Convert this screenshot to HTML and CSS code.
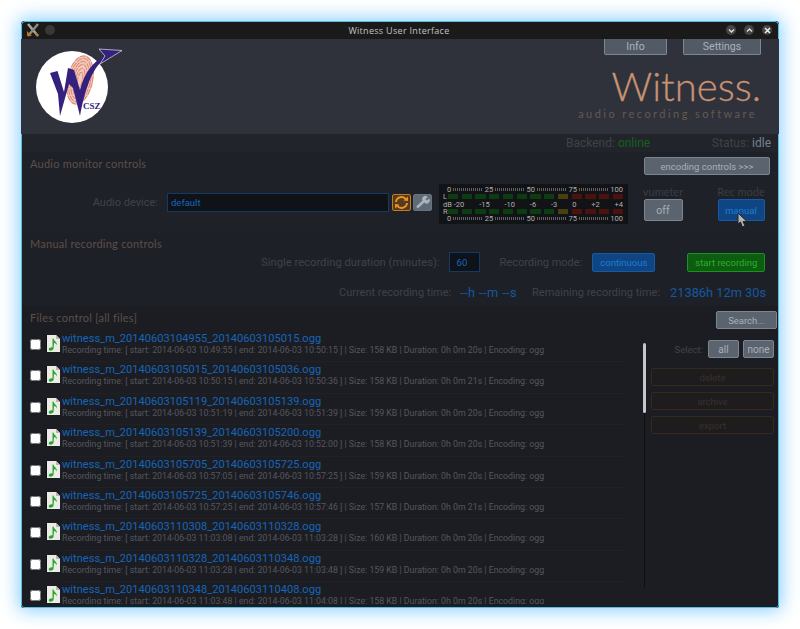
FILE: index.html
```html
<!DOCTYPE html>
<html>
<head>
    <title>Witness User Interface</title>
    <link rel="stylesheet" href="styles.css">
</head>
<body>
    <svg class="defs" width="0" height="0">
        <symbol id="ogg" viewBox="0 0 14 17">
            <path d="M0 0H10L14 4V17H0Z" fill="#ecece6"/>
            <path d="M0 0H1V17H0Z" fill="#111"/>
            <path d="M10 0V4H14Z" fill="#b9b9b0"/>
            <path d="M6.500 3.500L7.500 3.500C8 6 11.500 7 10.800 10.500C10.400 9 9.400 8.400 8 8.100L7.600 13.500C7.400 15.600 3.600 16.400 2.800 14.800C2.300 13.400 4.400 12 6.500 12.400Z" fill="#2aa52e"/>
        </symbol>
    </svg>

    <div class="window">
        <div class="titlebar">
            <div class="title-left">
                <svg class="app-icon" width="14" height="14" viewBox="0 0 14 14">
                    <path d="M2 1L12 13" stroke="#a8a8a0" stroke-width="2.5"/>
                    <path d="M12 1L2 13" stroke="#8f8a80" stroke-width="2.5"/>
                    <path d="M1 8L6 13H1ZM9 9L13 12L10 13Z" fill="#b5741f"/>
                </svg>
                <span class="title-dot"></span>
            </div>
            <div class="title-text">Witness User Interface</div>
            <div class="title-right">
                <span class="win-btn"><svg width="7" height="7" viewBox="0 0 7 7"><path d="M1 2.500L3.500 5L6 2.500" fill="none" stroke="#ddd" stroke-width="1.400"/></svg></span>
                <span class="win-btn"><svg width="7" height="7" viewBox="0 0 7 7"><path d="M1 4.500L3.500 2L6 4.500" fill="none" stroke="#ddd" stroke-width="1.400"/></svg></span>
                <span class="win-btn"><svg width="7" height="7" viewBox="0 0 7 7"><path d="M1 1L6 6M6 1L1 6" fill="none" stroke="#eee" stroke-width="1.500"/></svg></span>
            </div>
        </div>

        <div class="header">
            <svg class="logo" width="96" height="80" viewBox="30 46 96 80">
                <circle cx="72" cy="87" r="36" fill="#fff"/>
                <g transform="rotate(12 80 80)">
                    <ellipse cx="80" cy="80" rx="13" ry="25" fill="#f3c9bd"/>
                    <g fill="none" stroke="#dc8672" stroke-width="1" stroke-dasharray="6 1">
                        <ellipse cx="80" cy="80" rx="12.500" ry="24.500"/>
                        <ellipse cx="80" cy="80" rx="10.500" ry="22"/>
                        <ellipse cx="80" cy="80" rx="8.500" ry="19"/>
                        <ellipse cx="80" cy="80" rx="6.500" ry="16"/>
                        <ellipse cx="80" cy="80" rx="4.500" ry="12"/>
                        <ellipse cx="80" cy="80" rx="2.500" ry="8"/>
                    </g>
                </g>
                <path d="M50 73L57.500 71L64 92L68 68L74 70L80 90C84 74 92 62 105 56L99 49L122 50.500L100 64L104 59.500C92 68 85 90 80 116L73 88L69 84L60 116L58 94Z" fill="#34217e"/>
                <path d="M99 49L122 50.500L100 64L105 56Z" fill="#34217e" stroke="#fff" stroke-width=".6"/>
                <text class="logo-text" x="83" y="109">CSZ</text>
            </svg>
            <div class="top-buttons">
                <button class="tab tab-info">Info</button>
                <button class="tab tab-settings">Settings</button>
            </div>
            <div class="brand">
                <div class="brand-name">Witness.</div>
                <div class="brand-sub">audio recording software</div>
            </div>
        </div>

        <div class="status">
            <span class="dim">Backend: <span class="online">online</span></span>
            <span class="dim status-right">Status: <span class="idle">idle</span></span>
        </div>

        <div class="section monitor">
            <div class="section-head">
                <h2>Audio monitor controls</h2>
                <button class="btn btn-encoding">encoding controls &gt;&gt;&gt;</button>
            </div>
            <div class="monitor-row">
                <label class="dim device-label">Audio device:</label>
                <div class="field field-device">default</div>
                <button class="icon-btn icon-orange">
                    <svg width="15" height="15" viewBox="0 0 15 15"><path d="M2 7A5.500 5.500 0 0 1 12 4.500M13 8A5.500 5.500 0 0 1 3 10.500" fill="none" stroke="#e8922a" stroke-width="2"/><path d="M9.500 5.500L14 6V1.500ZM5.500 9.500L1 9V13.500Z" fill="#e8922a"/></svg>
                </button>
                <button class="icon-btn icon-grey">
                    <svg width="15" height="15" viewBox="0 0 15 15"><path d="M2 12.500L9 6" stroke="#aab4be" stroke-width="2.500"/><path d="M8 6A3 3 0 0 1 12.500 2L10.500 4.500L12 5.500L14 3.500A3 3 0 0 1 9.500 7.500Z" fill="#aab4be"/></svg>
                </button>
                <div class="vu">
                    <div class="vu-scale"><span>0</span><i></i><span>25</span><i></i><span>50</span><i></i><span>75</span><i></i><span>100</span></div>
                    <div class="vu-chan"><b>L</b><div class="vu-bars"><u></u><u></u><u></u><u></u><u></u><u></u><u></u><u></u><u class="y"></u><u class="r"></u><u class="r"></u><u class="r"></u><u class="r"></u></div></div>
                    <div class="vu-db"><span>dB -20</span><span>-15</span><span>-10</span><span>-6</span><span>-3</span><span>0</span><span>+2</span><span>+4</span></div>
                    <div class="vu-chan"><b>R</b><div class="vu-bars"><u></u><u></u><u></u><u></u><u></u><u></u><u></u><u></u><u class="y"></u><u class="r"></u><u class="r"></u><u class="r"></u><u class="r"></u></div></div>
                    <div class="vu-scale"><span>0</span><i></i><span>25</span><i></i><span>50</span><i></i><span>75</span><i></i><span>100</span></div>
                </div>
                <div class="toggle toggle-vu">
                    <div class="toggle-label">vumeter</div>
                    <button class="btn btn-off">off</button>
                </div>
                <div class="toggle toggle-rec">
                    <div class="toggle-label">Rec mode</div>
                    <button class="btn btn-blue btn-manual">manual</button>
                    <svg class="cursor" width="12" height="16" viewBox="0 0 12 16"><path d="M1 1L1 12L3.500 10L5.500 15L8 14L6 9.500L10 9.500Z" fill="#b4b4b4" stroke="#222"/></svg>
                </div>
            </div>
        </div>

        <div class="section manual">
            <h2>Manual recording controls</h2>
            <div class="manual-row">
                <span class="dim">Single recording duration (minutes):</span>
                <div class="field field-mins">60</div>
                <span class="dim mode-label">Recording mode:</span>
                <button class="btn btn-blue btn-cont">continuous</button>
                <button class="btn btn-start">start recording</button>
            </div>
            <div class="time-row">
                <span class="dim">Current recording time:</span>
                <span class="time time-cur">--h --m --s</span>
                <span class="dim time-rem">Remaining recording time:</span>
                <span class="time">21386h 12m 30s</span>
            </div>
        </div>

        <div class="files">
            <div class="files-head">
                <h2>Files control [all files]</h2>
                <button class="btn btn-search">Search...</button>
            </div>
            <div class="files-body">
                <div class="file-list">
                    <div class="file-row">
                        <input type="checkbox">
                        <svg class="file-icon"><use href="#ogg"/></svg>
                        <div class="file-info">
                            <a class="file-name">witness_m_20140603104955_20140603105015.ogg</a>
                            <div class="file-meta">Recording time: [ start: 2014-06-03 10:49:55 | end: 2014-06-03 10:50:15 ] | Size: 158 KB | Duration: 0h 0m 20s | Encoding: ogg</div>
                        </div>
                    </div>
                    <div class="file-row">
                        <input type="checkbox">
                        <svg class="file-icon"><use href="#ogg"/></svg>
                        <div class="file-info">
                            <a class="file-name">witness_m_20140603105015_20140603105036.ogg</a>
                            <div class="file-meta">Recording time: [ start: 2014-06-03 10:50:15 | end: 2014-06-03 10:50:36 ] | Size: 158 KB | Duration: 0h 0m 21s | Encoding: ogg</div>
                        </div>
                    </div>
                    <div class="file-row">
                        <input type="checkbox">
                        <svg class="file-icon"><use href="#ogg"/></svg>
                        <div class="file-info">
                            <a class="file-name">witness_m_20140603105119_20140603105139.ogg</a>
                            <div class="file-meta">Recording time: [ start: 2014-06-03 10:51:19 | end: 2014-06-03 10:51:39 ] | Size: 159 KB | Duration: 0h 0m 20s | Encoding: ogg</div>
                        </div>
                    </div>
                    <div class="file-row">
                        <input type="checkbox">
                        <svg class="file-icon"><use href="#ogg"/></svg>
                        <div class="file-info">
                            <a class="file-name">witness_m_20140603105139_20140603105200.ogg</a>
                            <div class="file-meta">Recording time: [ start: 2014-06-03 10:51:39 | end: 2014-06-03 10:52:00 ] | Size: 158 KB | Duration: 0h 0m 20s | Encoding: ogg</div>
                        </div>
                    </div>
                    <div class="file-row">
                        <input type="checkbox">
                        <svg class="file-icon"><use href="#ogg"/></svg>
                        <div class="file-info">
                            <a class="file-name">witness_m_20140603105705_20140603105725.ogg</a>
                            <div class="file-meta">Recording time: [ start: 2014-06-03 10:57:05 | end: 2014-06-03 10:57:25 ] | Size: 159 KB | Duration: 0h 0m 20s | Encoding: ogg</div>
                        </div>
                    </div>
                    <div class="file-row">
                        <input type="checkbox">
                        <svg class="file-icon"><use href="#ogg"/></svg>
                        <div class="file-info">
                            <a class="file-name">witness_m_20140603105725_20140603105746.ogg</a>
                            <div class="file-meta">Recording time: [ start: 2014-06-03 10:57:25 | end: 2014-06-03 10:57:46 ] | Size: 157 KB | Duration: 0h 0m 21s | Encoding: ogg</div>
                        </div>
                    </div>
                    <div class="file-row">
                        <input type="checkbox">
                        <svg class="file-icon"><use href="#ogg"/></svg>
                        <div class="file-info">
                            <a class="file-name">witness_m_20140603110308_20140603110328.ogg</a>
                            <div class="file-meta">Recording time: [ start: 2014-06-03 11:03:08 | end: 2014-06-03 11:03:28 ] | Size: 160 KB | Duration: 0h 0m 20s | Encoding: ogg</div>
                        </div>
                    </div>
                    <div class="file-row">
                        <input type="checkbox">
                        <svg class="file-icon"><use href="#ogg"/></svg>
                        <div class="file-info">
                            <a class="file-name">witness_m_20140603110328_20140603110348.ogg</a>
                            <div class="file-meta">Recording time: [ start: 2014-06-03 11:03:28 | end: 2014-06-03 11:03:48 ] | Size: 159 KB | Duration: 0h 0m 20s | Encoding: ogg</div>
                        </div>
                    </div>
                    <div class="file-row">
                        <input type="checkbox">
                        <svg class="file-icon"><use href="#ogg"/></svg>
                        <div class="file-info">
                            <a class="file-name">witness_m_20140603110348_20140603110408.ogg</a>
                            <div class="file-meta">Recording time: [ start: 2014-06-03 11:03:48 | end: 2014-06-03 11:04:08 ] | Size: 158 KB | Duration: 0h 0m 20s | Encoding: ogg</div>
                        </div>
                    </div>
                </div>
                <div class="scrollbar"><div class="scroll-thumb"></div></div>
                <div class="side">
                    <div class="select-row">
                        <span class="dim">Select:</span>
                        <button class="btn btn-all">all</button>
                        <button class="btn btn-none">none</button>
                    </div>
                    <button class="btn-off-action">delete</button>
                    <button class="btn-off-action">archive</button>
                    <button class="btn-off-action">export</button>
                </div>
            </div>
        </div>
    </div>
</body>
</html>
```

FILE: styles.css
```css
html, body {
    height: 100%;
}

body {
    margin: 0;
    padding: 21px;
    box-sizing: border-box;
    background: #fff;
    font-family: Roboto, "Liberation Sans", sans-serif;
    font-size: 12px;
    overflow: hidden;
}

.defs {
    position: absolute;
}

button {
    font-family: Roboto, "Liberation Sans", sans-serif;
    padding: 0;
    cursor: pointer;
}

h2 {
    margin: 0;
    font-family: Lato, sans-serif;
    font-weight: 400;
    font-size: 11px;
    line-height: 13px;
    letter-spacing: .25px;
    color: #5e4e46;
}

.dim {
    color: #404248;
}

.window {
    height: 587px;
    display: flex;
    flex-direction: column;
    background: #1e2027;
    border-radius: 4px 4px 3px 3px;
    outline: 1px solid #58bfe0;
    outline-offset: -1px;
    box-shadow: 0 0 18px 3px #8ed2ff;
    overflow: hidden;
}

/* title bar */
.titlebar {
    height: 18px;
    flex: none;
    display: flex;
    align-items: center;
    background: #1a1a1b;
}

.title-left {
    flex: 1;
    display: flex;
    align-items: center;
    padding-left: 5px;
    gap: 5px;
}

.title-dot {
    width: 10px;
    height: 10px;
    border-radius: 50%;
    background: #38383a;
}

.title-text {
    text-align: center;
    color: #c4c4c4;
    font-family: "Open Sans", sans-serif;
    font-size: 9px;
    letter-spacing: .3px;
}

.title-right {
    flex: 1;
    display: flex;
    justify-content: flex-end;
    gap: 8px;
    padding-right: 7px;
}

.win-btn {
    width: 10px;
    height: 10px;
    border-radius: 50%;
    background: #454545;
    display: flex;
    align-items: center;
    justify-content: center;
}

/* header */
.header {
    height: 95px;
    flex: none;
    background: #2f323b;
    display: flex;
    position: relative;
}

.logo {
    margin: 7px 0 0 9px;
}

.logo-text {
    font-family: "Liberation Serif", serif;
    font-size: 9px;
    font-weight: 700;
    fill: #34217e;
}

.top-buttons {
    position: absolute;
    top: 0;
    left: 583px;
    display: flex;
    gap: 16px;
}

.tab {
    height: 16px;
    background: #525a66;
    border: 1px solid #7b8894;
    border-top: 0;
    border-radius: 0 0 2px 2px;
    color: #a9b2bc;
    font-size: 10.500px;
}

.tab-info {
    width: 63px;
}

.tab-settings {
    width: 78px;
}

.brand {
    margin-left: auto;
    padding: 28px 18px 0 0;
    text-align: right;
}

.brand-name {
    font-family: Lato, sans-serif;
    font-weight: 300;
    font-size: 40px;
    line-height: 38px;
    color: #c89272;
    -webkit-text-stroke: .3px #c89272;
}

.brand-sub {
    font-family: Lato, sans-serif;
    font-size: 11px;
    letter-spacing: 2.450px;
    color: #675850;
    padding-right: 4px;
    margin-top: 2px;
}

/* status line */
.status {
    height: 18px;
    flex: none;
    display: flex;
    align-items: center;
    padding-left: 545px;
    background: #22242b;
}

.status-right {
    margin-left: auto;
    margin-right: 8px;
}

.online {
    color: #14611a;
}

.idle {
    color: #75828e;
}

/* sections */
.section {
    flex: none;
    padding: 0 9px;
}

.monitor {
    height: 81px;
    background: #1f2128;
}

.section-head {
    display: flex;
    align-items: flex-start;
    justify-content: space-between;
    padding: 5px 0 0;
}

.btn {
    background: #5b636e;
    border: 1px solid #7b8692;
    border-radius: 2px;
    color: #a6b0ba;
    font-size: 9.500px;
}

.btn-encoding {
    width: 126px;
    height: 18px;
}

.monitor-row {
    display: flex;
    align-items: flex-start;
    margin-top: 9px;
    height: 40px;
}

.device-label {
    width: 128px;
    text-align: right;
    margin-top: 12px;
    font-size: 11px;
}

.field {
    background: #0f1217;
    border: 1px solid #123a66;
    color: #1566c0;
    box-sizing: border-box;
}

.field-device {
    width: 222px;
    height: 19px;
    margin: 9px 0 0 9px;
    padding-left: 3px;
    line-height: 18px;
    font-size: 9.500px;
}

.icon-btn {
    width: 19px;
    height: 17px;
    margin-top: 10px;
    display: flex;
    align-items: center;
    justify-content: center;
    border-radius: 2px;
}

.icon-orange {
    margin-left: 3px;
    background: #553a1e;
    border: 1px solid #c8791e;
}

.icon-grey {
    margin-left: 2px;
    background: #5f6a76;
    border: 1px solid #66727e;
}

.vu {
    width: 189px;
    height: 40px;
    margin-left: 7px;
    padding: 2px 5px 2px 4px;
    box-sizing: border-box;
    background: #121316;
    display: flex;
    flex-direction: column;
    justify-content: space-between;
    color: #b0b0b0;
    font-size: 7.500px;
    line-height: 7px;
}

.vu-scale {
    display: flex;
    align-items: center;
    gap: 2px;
    padding-left: 4px;
}

.vu-scale i {
    flex: 1;
    height: 3px;
    background: repeating-linear-gradient(90deg, #606060 0 1px, transparent 1px 2px);
}

.vu-chan {
    display: flex;
    align-items: center;
    gap: 0;
    height: 7px;
}

.vu-chan b {
    font-weight: 400;
    width: 5px;
}

.vu-bars {
    flex: 1;
    display: flex;
    gap: 3.500px;
}

.vu-bars u {
    flex: 1;
    height: 5px;
    background: #0c3d10;
}

.vu-bars u.y {
    background: #47400e;
}

.vu-bars u.r {
    background: #4d120d;
}

.vu-db {
    display: flex;
    justify-content: space-between;
}

.toggle {
    position: relative;
    display: flex;
    flex-direction: column;
    align-items: center;
}

.toggle-label {
    font-family: Lato, sans-serif;
    font-size: 11px;
    line-height: 15px;
    color: #3a3d43;
    white-space: nowrap;
}

.toggle-vu {
    width: 40px;
    margin-left: 15px;
}

.toggle-rec {
    width: 48px;
    margin-left: 34px;
}

.btn-off {
    width: 39px;
    height: 22px;
    font-size: 10.500px;
}

.btn-blue {
    background: #0f4583;
    border: 1px solid #125ba8;
    color: #1f7cd4;
}

.btn-manual {
    width: 47px;
    height: 22px;
    font-size: 9.500px;
}

.cursor {
    position: absolute;
    left: 20px;
    top: 28px;
}

.manual {
    height: 73px;
    background: #1e2027;
}

.manual h2 {
    padding-top: 4px;
}

.manual-row {
    display: flex;
    align-items: center;
    height: 20px;
    margin-top: 2px;
    padding-left: 231px;
    font-size: 11.250px;
}

.field-mins {
    width: 31px;
    height: 20px;
    margin-left: 9px;
    padding-left: 7px;
    line-height: 19px;
    font-size: 9.500px;
}

.mode-label {
    margin-left: 20px;
    font-size: 11px;
}

.btn-cont {
    width: 63px;
    height: 19px;
    margin-left: 10px;
    font-size: 9.500px;
}

.btn-start {
    width: 78px;
    height: 19px;
    margin-left: 32px;
    background: #0e5c10;
    border: 1px solid #1a9420;
    color: #28b02e;
    font-size: 9.500px;
}

.time-row {
    display: flex;
    align-items: center;
    height: 20px;
    margin-top: 10px;
    padding-left: 309px;
    font-size: 11px;
}

.time {
    color: #15589f;
    font-size: 12.800px;
}

.time-cur {
    margin-left: 9px;
    letter-spacing: .4px;
}

.time-rem {
    margin: 0 10px 0 15px;
}

/* files */
.files {
    flex: 1;
    min-height: 0;
    display: flex;
    flex-direction: column;
    background: #1c1d23;
    padding-left: 9px;
}

.files-head {
    display: flex;
    align-items: flex-start;
    justify-content: space-between;
    padding: 5px 2px 2px 0;
}

.btn-search {
    width: 61px;
    height: 18px;
}

.files-body {
    flex: 1;
    min-height: 0;
    display: flex;
}

.file-list {
    width: 612px;
    height: 273px;
    overflow: hidden;
}

.file-row {
    height: 31.400px;
    display: flex;
    align-items: flex-start;
}

.file-row input {
    width: 11px;
    height: 11px;
    margin: 8px 0 0 0;
}

.file-icon {
    width: 14px;
    height: 17px;
    margin: 4px 0 0 5px;
    flex: none;
}

.file-info {
    width: 562px;
    height: 100%;
    box-sizing: border-box;
    margin-left: 2px;
    border-bottom: 1px solid #202126;
}

.file-name {
    display: block;
    color: #1565b9;
    font-size: 11.100px;
    line-height: 13px;
    margin-top: 1px;
}

.file-meta {
    color: #55575c;
    font-size: 8.770px;
    line-height: 11px;
    white-space: nowrap;
}

.scrollbar {
    width: 1px;
    height: 244px;
    margin: 12px 0 0 2px;
    background: #0c0d10;
    position: relative;
}

.scroll-thumb {
    position: absolute;
    left: -1px;
    top: 0;
    width: 3px;
    height: 70px;
    background: #c4c6c9;
    border-radius: 2px;
}

.side {
    width: 123px;
    margin-left: 6px;
    padding-top: 9px;
    display: flex;
    flex-direction: column;
    gap: 6px;
}

.select-row {
    display: flex;
    align-items: center;
    justify-content: flex-end;
    gap: 4px;
    height: 18px;
    font-size: 9.500px;
    margin-bottom: 4px;
}

.select-row .dim {
    margin-right: 1px;
}

.btn-all,
.btn-none {
    width: 31px;
    height: 18px;
    font-size: 10px;
}

.btn-off-action {
    height: 18px;
    background: #1f1c1d;
    border: 1px solid #33291f;
    border-radius: 2px;
    color: #36312e;
    font-size: 9.500px;
}
```
